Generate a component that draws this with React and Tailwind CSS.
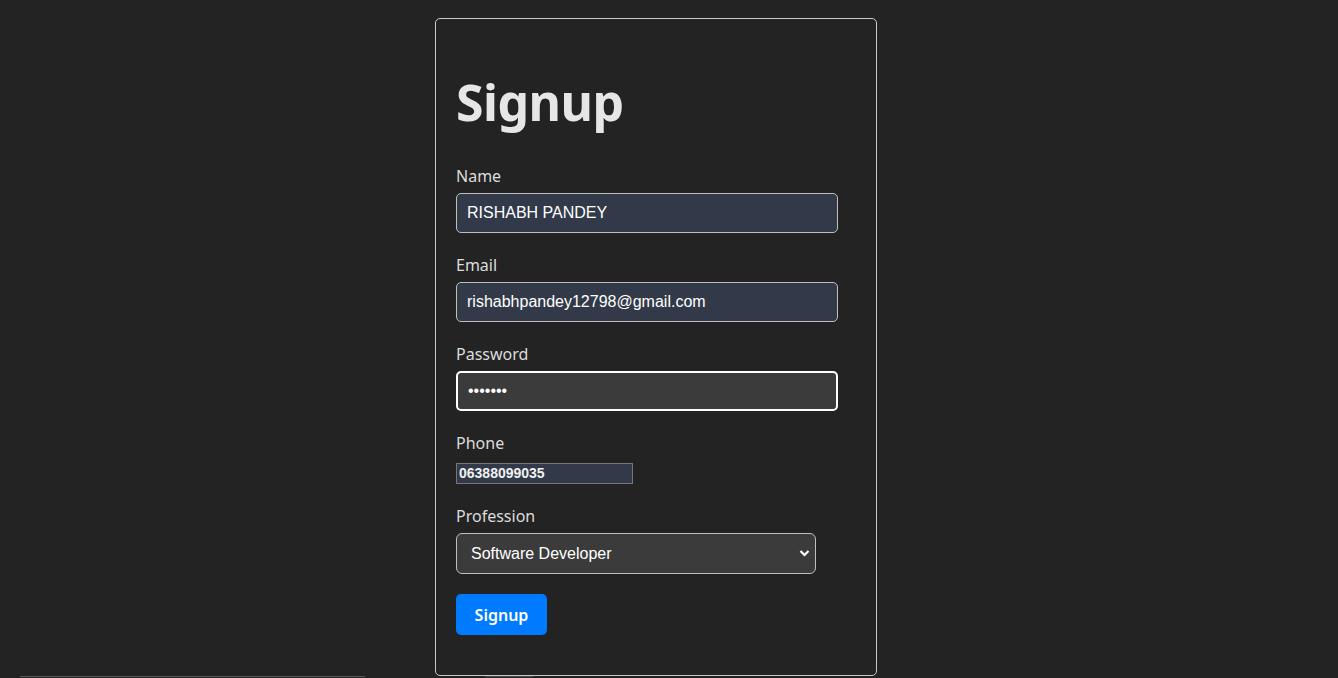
import { useState } from 'react';

const labelCls = 'block text-[16px] leading-6 text-[#dcdcdc] mb-[5px]';
const inputCls =
  'block w-[382px] h-10 px-[10px] rounded-[5px] border border-[#bfbfbf] bg-[#323a49] text-white text-[16px] outline-none';

const App = () => {
  const [name, setName] = useState('RISHABH PANDEY');
  const [email, setEmail] = useState('rishabhpandey12798@gmail.com');
  const [password, setPassword] = useState('1234567');
  const [phone, setPhone] = useState('06388099035');
  const [profession, setProfession] = useState('Software Developer');

  return (
    <div className="min-h-[678px] bg-[#232323] flex flex-col items-center pt-[18px] font-['Noto_Sans',sans-serif]">
      <div className="w-[442px] h-[658px] mr-[26px] border border-[#c8c8c8] rounded-[5px] px-5 pt-[50px]">
        <h1 className="text-[50px] leading-[66px] font-bold text-[#e6e6e6] mb-[29px] tracking-[-0.5px]">Signup</h1>

        <form onSubmit={(e) => e.preventDefault()}>
          <div className="mb-5">
            <label className={labelCls}>Name</label>
            <input
              className={`${inputCls} font-['Liberation_Sans',sans-serif]`}
              value={name}
              onChange={(e) => setName(e.target.value)}
            />
          </div>

          <div className="mb-5">
            <label className={labelCls}>Email</label>
            <input
              className={`${inputCls} font-['Liberation_Sans',sans-serif]`}
              value={email}
              onChange={(e) => setEmail(e.target.value)}
            />
          </div>

          <div className="mb-5">
            <label className={labelCls}>Password</label>
            <input
              type="password"
              className="block w-[382px] h-10 px-[10px] rounded-[5px] border-2 border-white bg-[#3b3b3b] text-white text-[16px] outline-none font-['Liberation_Sans',sans-serif]"
              value={password}
              onChange={(e) => setPassword(e.target.value)}
            />
          </div>

          <div className="mb-5">
            <label className="block text-[16px] leading-6 text-[#dcdcdc] mb-[8px]">Phone</label>
            <input
              className="block w-[177px] h-[21px] px-[2px] border border-[#767676] bg-[#323a49] text-[#f0f0f0] text-[14px] font-bold outline-none font-['Liberation_Sans',sans-serif]"
              value={phone}
              onChange={(e) => setPhone(e.target.value)}
            />
          </div>

          <div className="mb-5">
            <label className={labelCls}>Profession</label>
            <div className="relative w-[360px]">
              <select
                className="block w-[360px] h-[41px] pl-[14px] pr-8 appearance-none rounded-[6px] border border-[#bfbfbf] bg-[#3b3b3b] text-white text-[16px] outline-none font-['Liberation_Sans',sans-serif]"
                value={profession}
                onChange={(e) => setProfession(e.target.value)}
              >
                <option>Software Developer</option>
                <option>Designer</option>
                <option>Manager</option>
              </select>
              <svg
                className="absolute right-[6px] top-[16px] w-[11px] h-[8px] pointer-events-none"
                viewBox="0 0 11 8"
                fill="none"
                stroke="white"
                strokeWidth="2.2"
              >
                <path d="M1.5 2l4 4 4-4" />
              </svg>
            </div>
          </div>

          <button
            type="submit"
            className="w-[91px] h-[41px] rounded-[5px] bg-[#007bff] text-white text-[16px] font-semibold"
          >
            Signup
          </button>
        </form>
      </div>

      <div className="w-full flex h-px">
        <div className="ml-5 w-[345px] bg-[#5a5a5a]" />
        <div className="ml-[120px] w-[48px] bg-[#4a4a4a]" />
      </div>
    </div>
  );
};

export default App;
